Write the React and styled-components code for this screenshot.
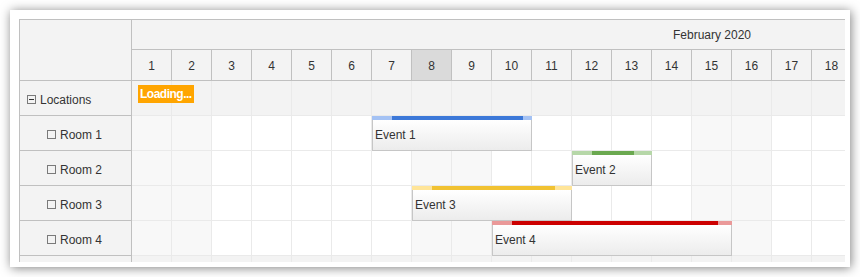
import React from "react";
import styled, { createGlobalStyle } from "styled-components";

const Global = createGlobalStyle`
  html, body { margin: 0; padding: 0; background: #fff; }
  body { font-family: "Liberation Sans", Arial, sans-serif; font-size: 12px; color: #333; }
`;

const DAY_W = 40;
const MONTH_DAYS = 29;
const DAYS = Array.from({ length: 18 }, (_, i) => i + 1);
const WEEKEND = new Set([1, 2, 8, 9, 15, 16, 22, 23, 29]);

const Panel = styled.div`
  margin: 10px;
  width: 840px;
  height: 257px;
  box-sizing: border-box;
  padding: 9px 5px 5px 9px;
  background: #fff;
  box-shadow: 1px 1px 10px rgba(0, 0, 0, 0.5);
  overflow: hidden;
`;

const Scheduler = styled.div`
  display: grid;
  grid-template-columns: 112px minmax(0, 1fr);
  width: 826px;
  height: 243px;
  box-sizing: border-box;
  border-top: 1px solid #c0c0c0;
  border-left: 1px solid #c0c0c0;
  overflow: hidden;
`;

const RowHeaders = styled.div`
  display: flex;
  flex-direction: column;
  border-right: 1px solid #c0c0c0;
  background: #f3f3f3;
`;

const Corner = styled.div`
  height: 61px;
  flex: none;
  box-sizing: border-box;
  border-bottom: 1px solid #c0c0c0;
`;

const RowHeader = styled.div`
  height: 35px;
  flex: none;
  box-sizing: border-box;
  border-bottom: 1px solid #c0c0c0;
  display: flex;
  align-items: center;
  gap: 4px;
  padding: 3px 0 0 ${(p) => 7 + p.$level * 20}px;
  color: #333;
  white-space: nowrap;
`;

const TreeBox = styled.span`
  position: relative;
  width: 9px;
  height: 9px;
  box-sizing: border-box;
  border: 1px solid #7a7a7a;
  flex: none;
  &::after {
    content: "";
    display: ${(p) => (p.$minus ? "block" : "none")};
    position: absolute;
    left: 1px;
    right: 1px;
    top: 3px;
    height: 1px;
    background: #333;
  }
`;

const Timeline = styled.div`
  overflow: hidden;
  min-width: 0;
`;

const Track = styled.div`
  width: ${MONTH_DAYS * DAY_W}px;
  display: flex;
  flex-direction: column;
`;

const MonthRow = styled.div`
  height: 30px;
  box-sizing: border-box;
  border-bottom: 1px solid #c0c0c0;
  background: #f3f3f3;
  display: flex;
  align-items: center;
  justify-content: center;
  padding-top: 1px;
  color: #333;
`;

const DayRow = styled.div`
  display: flex;
  height: 31px;
  box-sizing: border-box;
  border-bottom: 1px solid #c0c0c0;
  background: #f3f3f3;
`;

const DayCell = styled.div`
  width: ${DAY_W}px;
  flex: none;
  box-sizing: border-box;
  border-right: 1px solid #c0c0c0;
  background: ${(p) => (p.$active ? "#dadada" : "#f3f3f3")};
  display: flex;
  align-items: center;
  justify-content: center;
  padding-top: 2px;
  color: #333;
`;

const Row = styled.div`
  position: relative;
  display: flex;
  height: 35px;
  flex: none;
  box-sizing: border-box;
  border-bottom: 1px solid #eaeaea;
`;

const Cell = styled.div`
  width: ${DAY_W}px;
  flex: none;
  box-sizing: border-box;
  border-right: 1px solid #eaeaea;
  background: ${(p) => (p.$parent ? "#f3f3f3" : p.$weekend ? "#f8f8f8" : "#fff")};
`;

const Loading = styled.div`
  position: absolute;
  left: 6px;
  top: 4px;
  height: 18px;
  padding: 0 2px;
  background: #ffa500;
  color: #fff;
  font-weight: bold;
  font-size: 12px;
  letter-spacing: -0.5px;
  line-height: 18px;
  white-space: nowrap;
`;

const Event = styled.div`
  position: absolute;
  top: 0;
  height: 35px;
  display: flex;
  flex-direction: column;
`;

const Bar = styled.div`
  position: relative;
  height: 4px;
  flex: none;
  background: ${(p) => p.$light};
`;

const BarFill = styled.div`
  position: absolute;
  top: 0;
  bottom: 0;
  background: ${(p) => p.$dark};
`;

const EventBody = styled.div`
  flex: 1;
  box-sizing: border-box;
  border: 1px solid #c6c6c6;
  border-top: none;
  background: linear-gradient(to bottom, #ffffff, #ececec);
  display: flex;
  align-items: center;
  padding: 0 0 0 2px;
  color: #333;
  white-space: nowrap;
  overflow: hidden;
`;

const rows = [
  { name: "Locations", level: 0, parent: true },
  { name: "Room 1", level: 1 },
  { name: "Room 2", level: 1 },
  { name: "Room 3", level: 1 },
  { name: "Room 4", level: 1 },
  { name: "", level: 0, parent: true, empty: true },
];

const events = {
  "Room 1": { text: "Event 1", start: 7, days: 4, fill: [20, 131], light: "#a4c2f4", dark: "#3c78d8" },
  "Room 2": { text: "Event 2", start: 12, days: 2, fill: [20, 42], light: "#b6d7a8", dark: "#6aa84f" },
  "Room 3": { text: "Event 3", start: 8, days: 4, fill: [20, 123], light: "#ffe599", dark: "#f1c232" },
  "Room 4": { text: "Event 4", start: 10, days: 6, fill: [20, 206], light: "#ea9999", dark: "#cc0000" },
};

export default function App() {
  return (
    <>
      <Global />
      <Panel>
        <Scheduler>
          <RowHeaders>
            <Corner />
            {rows.map((r, i) => (
              <RowHeader key={i} $level={r.level}>
                {!r.empty && <TreeBox $minus={r.parent} />}
                {r.name}
              </RowHeader>
            ))}
          </RowHeaders>
          <Timeline>
            <Track>
              <MonthRow>February 2020</MonthRow>
              <DayRow>
                {DAYS.map((d) => (
                  <DayCell key={d} $active={d === 8}>
                    {d}
                  </DayCell>
                ))}
              </DayRow>
              {rows.map((r, i) => {
                const ev = events[r.name];
                return (
                  <Row key={i}>
                    {DAYS.map((d) => (
                      <Cell key={d} $parent={r.parent} $weekend={WEEKEND.has(d)} />
                    ))}
                    {i === 0 && <Loading>Loading...</Loading>}
                    {ev && (
                      <Event style={{ left: (ev.start - 1) * DAY_W, width: ev.days * DAY_W }}>
                        <Bar $light={ev.light}>
                          <BarFill $dark={ev.dark} style={{ left: ev.fill[0], width: ev.fill[1] }} />
                        </Bar>
                        <EventBody>{ev.text}</EventBody>
                      </Event>
                    )}
                  </Row>
                );
              })}
            </Track>
          </Timeline>
        </Scheduler>
      </Panel>
    </>
  );
}
